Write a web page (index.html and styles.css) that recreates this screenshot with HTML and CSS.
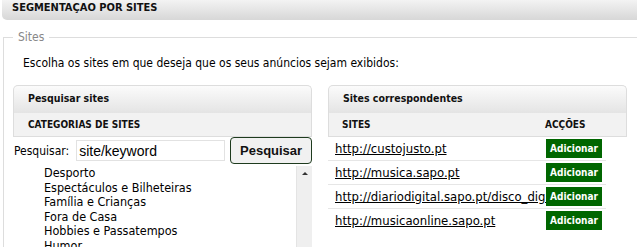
FILE: index.html
```html
<!DOCTYPE html>
<html lang="pt">
<head>
  <meta charset="UTF-8">
  <title>Segmentação por sites</title>
  <link rel="stylesheet" href="styles.css">
</head>
<body>
  <div class="page">
    <div class="section-title">SEGMENTAÇAO POR SITES</div>

    <fieldset class="sites-box">
      <legend>Sites</legend>
      <p class="intro">Escolha os sites em que deseja que os seus anúncios sejam exibidos:</p>

      <div class="columns">
        <div class="panel">
          <div class="panel-head">Pesquisar sites</div>
          <div class="panel-sub">CATEGORIAS DE SITES</div>

          <div class="search-row">
            <label for="keyword">Pesquisar:</label>
            <input type="text" id="keyword" value="site/keyword">
            <button class="search-btn">Pesquisar</button>
          </div>

          <div class="category-list">
            <ul>
              <li>Desporto</li>
              <li>Espectáculos e Bilheteiras</li>
              <li>Família e Crianças</li>
              <li>Fora de Casa</li>
              <li>Hobbies e Passatempos</li>
              <li>Humor</li>
            </ul>
            <div class="scroll-track"><span class="arrow-up"></span></div>
          </div>
        </div>

        <div class="panel">
          <div class="panel-head">Sites correspondentes</div>
          <div class="panel-sub table-head">
            <span>SITES</span>
            <span class="col-actions">ACÇÕES</span>
          </div>

          <div class="result-row">
            <a href="#" class="site-link">http://custojusto.pt</a>
            <button class="add-btn">Adicionar</button>
          </div>
          <div class="result-row">
            <a href="#" class="site-link">http://musica.sapo.pt</a>
            <button class="add-btn">Adicionar</button>
          </div>
          <div class="result-row">
            <a href="#" class="site-link">http://diariodigital.sapo.pt/disco_digital</a>
            <button class="add-btn">Adicionar</button>
          </div>
          <div class="result-row">
            <a href="#" class="site-link">http://musicaonline.sapo.pt</a>
            <button class="add-btn">Adicionar</button>
          </div>
        </div>
      </div>
    </fieldset>
  </div>
</body>
</html>
```

FILE: styles.css
```css
html, body {
  margin: 0;
  padding: 0;
  overflow: hidden;
  background: white;
}
body {
  font-family: "DejaVu Sans Condensed", "DejaVu Sans", sans-serif;
  font-stretch: condensed;
  font-size: 12px;
  color: #000;
}
.page {
  width: 660px;
  padding-left: 2px;
}
.section-title {
  height: 20px;
  line-height: 15px;
  padding-left: 10px;
  font-weight: bold;
  font-size: 11px;
  color: #111;
  background: linear-gradient(#f3f3f3, #d7d7d7);
  border-bottom-left-radius: 5px;
}
.sites-box {
  margin: 10px 0 0 1px;
  padding: 0 0 20px 9px;
  border: 1px solid #ddd;
  border-right: none;
}
.sites-box legend {
  padding: 0 5px;
  font-size: 12px;
  line-height: 14px;
  color: #888;
}
.intro {
  margin: 12px 0 15px 10px;
  line-height: 14px;
}
.columns {
  display: flex;
  gap: 16px;
}
.panel {
  width: 299px;
}
.panel-head {
  height: 27px;
  line-height: 24px;
  padding-left: 14px;
  font-size: 10.5px;
  font-weight: bold;
  color: #111;
  background: linear-gradient(#fbfbfb, #e4e4e4);
  border: 1px solid #ddd;
  border-bottom: none;
  border-radius: 5px 5px 0 0;
}
.panel-sub {
  height: 23px;
  line-height: 24px;
  padding-left: 14px;
  font-size: 10px;
  font-weight: bold;
  color: #111;
  background: #f2f2f2;
  border: 1px solid #ddd;
  border-top: none;
}
.table-head {
  display: flex;
  padding-left: 13px;
}
.col-actions {
  margin-left: auto;
  width: 81px;
}
.search-row {
  display: flex;
  align-items: center;
  height: 27px;
  padding-left: 1px;
}
.search-row label {
  font-size: 12px;
  margin-right: 7px;
}
.search-row input {
  width: 143px;
  height: 17px;
  padding: 1px 2px;
  border: 1px solid #e2e2e2;
  font-family: "Liberation Sans", Arial, sans-serif;
  font-size: 14px;
  color: #000;
}
.search-btn {
  margin-left: 5px;
  width: 82px;
  height: 27px;
  border: 1px solid #1e3b1e;
  border-radius: 4px;
  background: #f1f1f1;
  font-family: "Liberation Sans", Arial, sans-serif;
  font-size: 13px;
  font-weight: bold;
  color: #111;
}
.category-list {
  display: flex;
  height: 90px;
  padding-top: 1px;
}
.category-list ul {
  flex: 1;
  list-style: none;
  margin: 0;
  padding: 1px 0 0 31px;
  font-size: 12.5px;
  line-height: 14.6px;
}
.scroll-track {
  width: 15px;
  margin-top: 1px;
  background: #efefef;
  border-left: 1px solid #e4e4e4;
  position: relative;
}
.arrow-up {
  position: absolute;
  top: 6px;
  left: 5px;
  border: 3px solid transparent;
  border-bottom: 3px solid #333;
  border-top: none;
}
.result-row {
  display: flex;
  align-items: center;
  height: 23px;
  width: 271px;
  padding-left: 7px;
  border-bottom: 1px solid #e6e6e6;
}
.result-row:last-child {
  border-bottom: none;
}
.site-link {
  flex: 1;
  overflow: hidden;
  white-space: nowrap;
  font-size: 13px;
  color: #000;
}
.add-btn {
  width: 56px;
  height: 19px;
  margin-right: 4px;
  padding: 0;
  border: none;
  background: #006600;
  color: white;
  font-family: inherit;
  font-size: 10px;
  font-weight: bold;
}
```
